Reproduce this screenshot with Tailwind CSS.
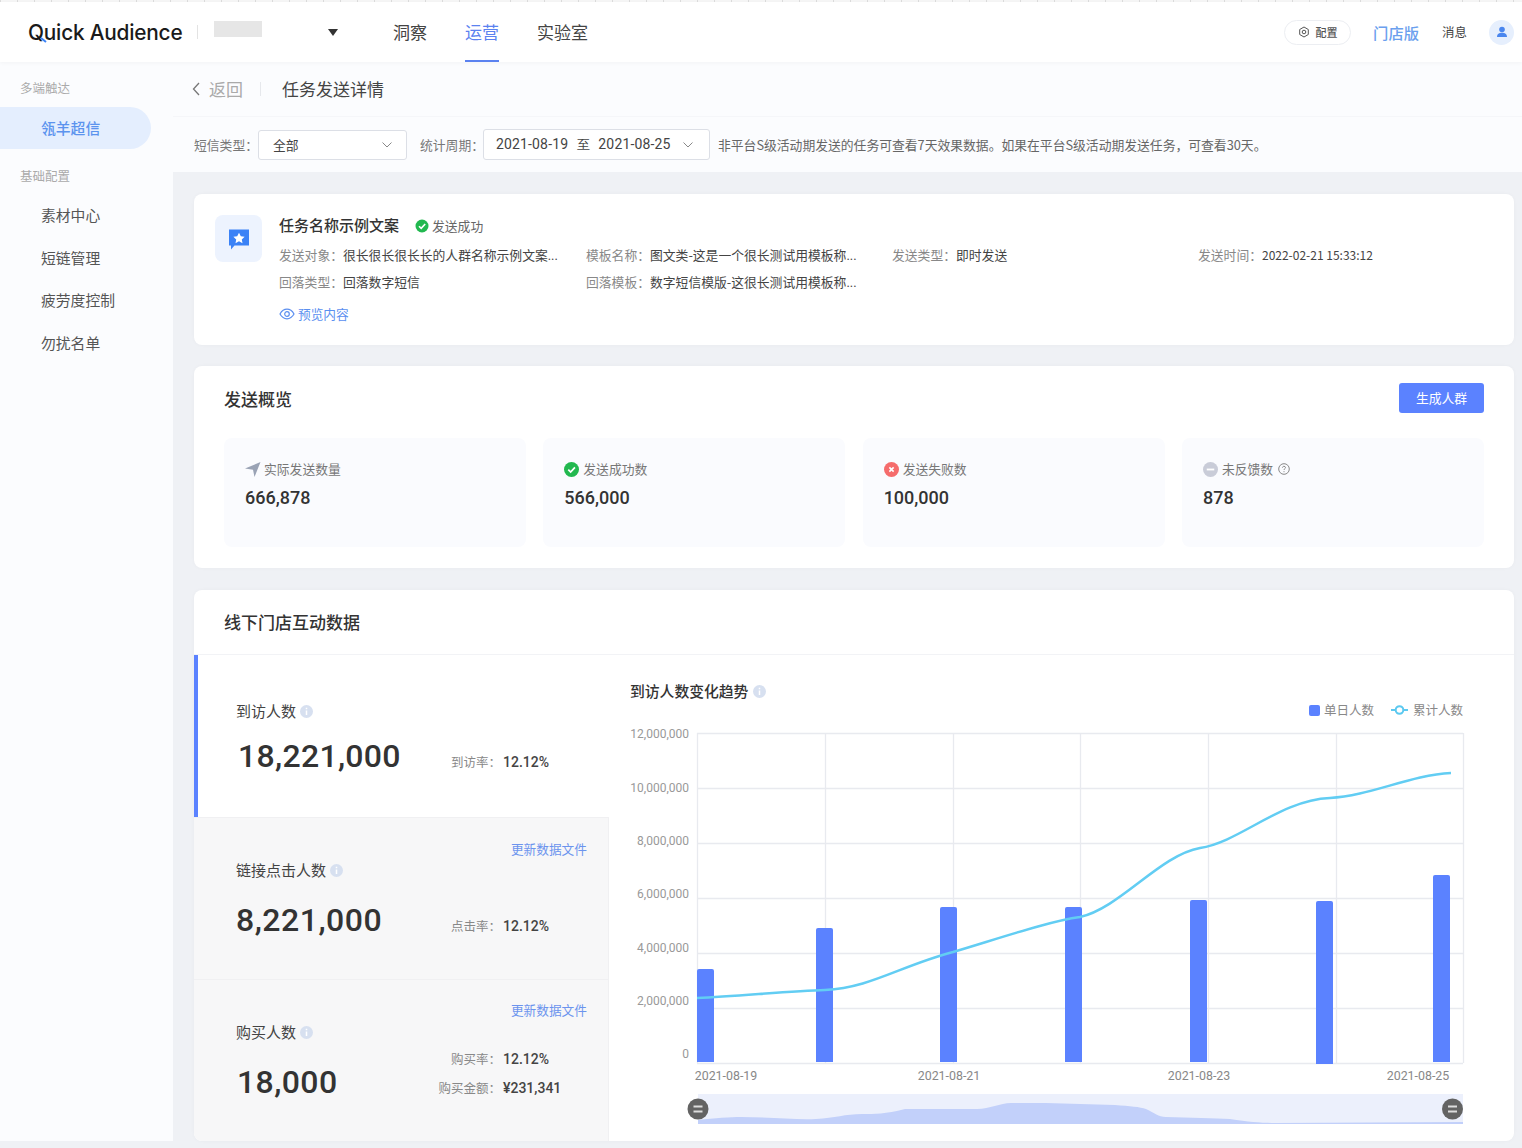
<!DOCTYPE html>
<html lang="zh">
<head>
<meta charset="UTF-8">
<title>任务发送详情</title>
<script src="https://cdn.jsdelivr.net/npm/@tailwindcss/browser@4"></script>
</head>
<body class="bg-[#eff1f5] text-[#333] font-['Noto_Sans_CJK_SC','Noto_Sans',sans-serif] w-[1522px] h-[1148px] overflow-hidden">

<!-- 顶栏 -->
<div class="h-[2px] bg-[repeating-linear-gradient(90deg,#dcdcdc_0_1px,#f6f6f6_1px_17px)]"></div>
<header class="h-[60px] bg-white flex items-center pl-[28px] pr-[8px] shadow-[0_1px_4px_rgba(0,0,0,0.04)] relative z-10">
  <div class="relative mt-[2px] w-[155px] text-[20.8px] leading-none font-medium tracking-[-0.2px] whitespace-nowrap text-[#1a1a1a] font-['Inter',sans-serif]">Quick Audience
    <svg class="absolute left-[12px] top-[14px]" width="7" height="6" viewBox="0 0 7 6"><path d="M1 1L6 5" stroke="#3b82f6" stroke-width="2"/></svg>
  </div>
  <div class="w-px h-[14px] bg-[#e3e3e3] ml-[14px]"></div>
  <div class="w-[48px] h-[16px] bg-[#e6e6e6] ml-[16px] -mt-[6px]"></div>
  <svg class="ml-[66px]" width="10" height="7" viewBox="0 0 10 7"><path d="M0 0h10L5 7z" fill="#333"/></svg>
  <nav class="flex ml-[55px] gap-[38px] text-[17px] h-full">
    <a class="flex items-center text-[#444]">洞察</a>
    <a class="flex items-center text-[#5b82f0] border-b-2 border-[#5b82f0] pt-[2px]">运营</a>
    <a class="flex items-center text-[#444]">实验室</a>
  </nav>
  <div class="ml-auto flex items-center">
    <div class="flex items-center h-[25px] w-[67px] rounded-full border border-[#eceef2] justify-center gap-[6px] text-[11px] text-[#555] font-medium">
      <svg width="12" height="12" viewBox="0 0 12 12" fill="none" stroke="#555"><path d="M6 1l4.300 2.500v5L6 11 1.700 8.500v-5z"/><circle cx="6" cy="6" r="1.800"/></svg>配置
    </div>
    <span class="ml-[22px] text-[15.3px] text-[#6aa0ee] font-medium">门店版</span>
    <span class="ml-[23px] text-[12.5px] text-[#444]">消息</span>
    <div class="ml-[22px] w-[25px] h-[25px] rounded-full bg-[#e6effd] flex items-center justify-center">
      <svg width="12" height="12" viewBox="0 0 12 12" fill="#4a86ee"><circle cx="6" cy="3.500" r="2.800"/><path d="M1 11c0-3 2.200-4.300 5-4.300s5 1.300 5 4.300z"/></svg>
    </div>
  </div>
</header>

<div class="flex h-[1079px]">
  <!-- 侧栏 -->
  <aside class="w-[173px] shrink-0 bg-[#fbfcfe] pr-[22px] text-[14.8px] text-[#555]">
    <div class="pl-[20px] pt-[17px] h-[45px] text-[12.5px] text-[#aaa] leading-[17px]">多端触达</div>
    <div class="h-[42px] rounded-r-full bg-[#e4eefe] text-[#5b93ee] font-medium flex items-center pl-[41px]">瓴羊超信</div>
    <div class="pl-[20px] pt-[18px] h-[45px] text-[12.5px] text-[#aaa] leading-[17px]">基础配置</div>
    <div class="pl-[41px] h-[42.500px] flex items-center">素材中心</div>
    <div class="pl-[41px] h-[42.500px] flex items-center">短链管理</div>
    <div class="pl-[41px] h-[42.500px] flex items-center">疲劳度控制</div>
    <div class="pl-[41px] h-[42.500px] flex items-center">勿扰名单</div>
  </aside>

  <main class="flex-1 min-w-0">
    <!-- 标题 -->
    <div class="h-[55px] bg-[#fbfcfe] border-b border-[#f5f6f9] flex items-center pl-[19px]">
      <svg width="8" height="14" viewBox="0 0 8 14" fill="none" stroke="#777" stroke-width="1.300"><path d="M7 1L1.500 7 7 13"/></svg>
      <span class="ml-[9px] text-[17px] text-[#aaa]">返回</span>
      <div class="w-px h-[14px] bg-[#e6e8ec] ml-[17px]"></div>
      <span class="ml-[21px] text-[17px] text-[#444]">任务发送详情</span>
    </div>
    <!-- 筛选 -->
    <div class="h-[55px] bg-[#fbfcfe] flex items-center pl-[21px] text-[12.8px] text-[#777]">
      <span class="w-[64px] whitespace-nowrap">短信类型：</span>
      <div class="w-[149px] h-[30px] bg-white border border-[#dcdfe6] rounded-[3px] flex items-center justify-between pl-[14px] pr-[14px] text-[#444]">
        全部
        <svg width="10" height="6" viewBox="0 0 10 6" fill="none" stroke="#888"><path d="M.5.500L5 5 9.500.5"/></svg>
      </div>
      <span class="ml-[13px] w-[63px] whitespace-nowrap">统计周期：</span>
      <div class="w-[227px] h-[31px] bg-white border border-[#dcdfe6] rounded-[3px] flex items-center pl-[12px] text-[#444] text-[14px] tracking-[0.15px] font-['Roboto',sans-serif]">
        <span>2021-08-19</span><span class="ml-[9px] text-[12.8px]">至</span><span class="ml-[8px]">2021-08-25</span>
        <svg class="ml-[12px]" width="10" height="6" viewBox="0 0 10 6" fill="none" stroke="#888"><path d="M.5.500L5 5 9.500.5"/></svg>
      </div>
      <span class="ml-[8px] text-[#666] whitespace-nowrap">非平台S级活动期发送的任务可查看7天效果数据。如果在平台S级活动期发送任务，可查看30天。</span>
    </div>

    <div class="pl-[21px] pr-[8px] pt-[22px]">
      <!-- 任务信息 -->
      <section class="h-[151px] bg-white rounded-lg flex pl-[21px] pt-[21px] shadow-[0_0_4px_rgba(0,0,0,0.03)]">
        <div class="w-[47px] h-[47px] bg-[#edf3fe] rounded-lg flex items-center justify-center shrink-0">
          <svg width="24" height="24" viewBox="0 0 24 24"><path d="M2 2.500h20v16H7.500L4 22.500v-4H2z" fill="#3b82f6"/><path d="M12 5.800l1.800 3.500 3.800.5-2.800 2.600.7 3.800-3.500-1.900-3.500 1.900.7-3.800-2.800-2.600 3.800-.5z" fill="#fff"/></svg>
        </div>
        <div class="ml-[17px] flex-1">
          <div class="flex items-center h-[21px]">
            <span class="text-[15px] font-medium text-[#333]">任务名称示例文案</span>
            <svg class="ml-[16px]" width="14" height="14" viewBox="0 0 14 14"><circle cx="7" cy="7" r="6.500" fill="#22b84f"/><path d="M4 7.200l2.200 2.200L10.200 5" fill="none" stroke="#fff" stroke-width="1.600"/></svg>
            <span class="ml-[3px] text-[12.8px] text-[#666]">发送成功</span>
          </div>
          <div class="grid grid-cols-[307px_306px_306px_1fr] mt-[10px] text-[12.8px] leading-[18px] text-[#444] whitespace-nowrap">
            <div><span class="text-[#888]">发送对象：</span>很长很长很长长的人群名称示例文案<span class="font-['Roboto',sans-serif]">...</span></div>
            <div><span class="text-[#888]">模板名称：</span>图文类-这是一个很长测试用模板称<span class="font-['Roboto',sans-serif]">...</span></div>
            <div><span class="text-[#888]">发送类型：</span>即时发送</div>
            <div><span class="text-[#888]">发送时间：</span><span class="text-[12px]">2022-02-21 15:33:12</span></div>
            <div class="mt-[8px]"><span class="text-[#888]">回落类型：</span>回落数字短信</div>
            <div class="mt-[8px]"><span class="text-[#888]">回落模板：</span>数字短信模版-这很长测试用模板称<span class="font-['Roboto',sans-serif]">...</span></div>
          </div>
          <div class="flex items-center mt-[13px] text-[12.7px] leading-[18px] text-[#5b8ff0]">
            <svg width="16" height="12" viewBox="0 0 16 12" fill="none" stroke="#5b8ff0" stroke-width="1.200"><path d="M1 6c1.800-3.200 4.200-4.800 7-4.800S13.200 2.800 15 6c-1.800 3.200-4.200 4.800-7 4.800S2.800 9.200 1 6z"/><circle cx="8" cy="6" r="2.300"/></svg>
            <span class="ml-[3px]">预览内容</span>
          </div>
        </div>
      </section>

      <!-- 发送概览 -->
      <section class="mt-[21px] h-[202px] bg-white rounded-lg px-[30px] shadow-[0_0_4px_rgba(0,0,0,0.03)]">
        <div class="h-[72px] flex items-start justify-between pt-[17px]">
          <h2 class="text-[17px] leading-[31px] font-medium text-[#333]">发送概览</h2>
          <button class="w-[85px] h-[30px] bg-[#5b82ff] rounded-[3px] text-[12.8px] text-white">生成人群</button>
        </div>
        <div class="grid grid-cols-4 gap-[17.300px]">
          <div class="h-[109px] bg-[#fafbfe] rounded-lg pl-[21px] pt-[22px]">
            <div class="flex items-center h-[18px] text-[12.8px] text-[#777]">
              <svg width="16" height="15" viewBox="0 0 16 15"><path d="M15.500 0L0 6.500l8 1.200L9.500 15z" fill="#9aa3b5"/></svg>
              <span class="ml-[3px]">实际发送数量</span>
            </div>
            <div class="mt-[6px] text-[18px] leading-[28px] font-medium font-['Roboto',sans-serif] text-[#333]">666,878</div>
          </div>
          <div class="h-[109px] bg-[#fafbfe] rounded-lg pl-[21px] pt-[22px]">
            <div class="flex items-center h-[18px] text-[12.8px] text-[#777]">
              <svg width="15" height="15" viewBox="0 0 14 14"><circle cx="7" cy="7" r="7" fill="#22b84f"/><path d="M4 7.200l2.200 2.200L10.200 5" fill="none" stroke="#fff" stroke-width="1.600"/></svg>
              <span class="ml-[4px]">发送成功数</span>
            </div>
            <div class="mt-[6px] text-[18px] leading-[28px] font-medium font-['Roboto',sans-serif] text-[#333]">566,000</div>
          </div>
          <div class="h-[109px] bg-[#fafbfe] rounded-lg pl-[21px] pt-[22px]">
            <div class="flex items-center h-[18px] text-[12.8px] text-[#777]">
              <svg width="15" height="15" viewBox="0 0 14 14"><circle cx="7" cy="7" r="7" fill="#f56c6c"/><path d="M5 5l4 4M9 5L5 9" fill="none" stroke="#fff" stroke-width="1.500"/></svg>
              <span class="ml-[4px]">发送失败数</span>
            </div>
            <div class="mt-[6px] text-[18px] leading-[28px] font-medium font-['Roboto',sans-serif] text-[#333]">100,000</div>
          </div>
          <div class="h-[109px] bg-[#fafbfe] rounded-lg pl-[21px] pt-[22px]">
            <div class="flex items-center h-[18px] text-[12.8px] text-[#777]">
              <svg width="15" height="15" viewBox="0 0 14 14"><circle cx="7" cy="7" r="7" fill="#c9ccd8"/><path d="M3.500 7h7" fill="none" stroke="#fff" stroke-width="1.700"/></svg>
              <span class="ml-[4px]">未反馈数</span>
              <svg class="ml-[5px]" width="12" height="12" viewBox="0 0 12 12" fill="none" stroke="#888"><circle cx="6" cy="6" r="5.300"/><path d="M4.500 4.700C4.500 3.800 5.200 3.300 6 3.300s1.500.5 1.500 1.300C7.500 5.700 6 5.700 6 7"/><path d="M6 8.200v1"/></svg>
            </div>
            <div class="mt-[6px] text-[18px] leading-[28px] font-medium font-['Roboto',sans-serif] text-[#333]">878</div>
          </div>
        </div>
      </section>

      <!-- 互动数据 -->
      <section class="mt-[22px] h-[551px] bg-white rounded-lg overflow-hidden shadow-[0_0_4px_rgba(0,0,0,0.03)]">
        <div class="h-[65px] border-b border-[#f2f3f6] pl-[30px] flex items-center">
          <h2 class="text-[17px] font-medium text-[#333]">线下门店互动数据</h2>
        </div>
        <div class="flex h-[486px]">
          <div class="w-[415px] shrink-0 flex flex-col">
            <div class="h-[162px] border-l-4 border-[#5b82ff] pl-[38px] pt-[46px]">
              <div class="flex items-center h-[20px] text-[15px] text-[#444]">到访人数
                <svg class="ml-[4px]" width="13" height="13" viewBox="0 0 13 13"><circle cx="6.500" cy="6.500" r="6.500" fill="#d7e0f0"/><path d="M6.500 5.500v4.500M6.500 2.800v1.400" stroke="#fff" stroke-width="1.500"/></svg>
              </div>
              <div class="flex items-end mt-[13px]">
                <div class="w-[197px] pl-[2px] text-[32px] leading-[44px] font-medium font-['Roboto',sans-serif] tracking-[0.3px] text-[#333]">18,221,000</div>
                <div class="flex items-center h-[20px] mb-[6px]"><span class="w-[68px] text-right text-[12.5px] text-[#888]">到访率：</span><span class="ml-[2px] text-[14px] font-medium font-['Roboto',sans-serif] text-[#444]">12.12%</span></div>
              </div>
            </div>
            <div class="h-[163px] bg-[#f7f7f8] border-y border-[#f0f0f2] border-r pl-[42px] pr-[21px] pt-[22px]">
              <div class="text-right text-[12.7px] leading-[18px] text-[#6c94ee]">更新数据文件</div>
              <div class="flex items-center h-[20px] mt-[2px] text-[15px] text-[#444]">链接点击人数
                <svg class="ml-[4px]" width="13" height="13" viewBox="0 0 13 13"><circle cx="6.500" cy="6.500" r="6.500" fill="#d7e0f0"/><path d="M6.500 5.500v4.500M6.500 2.800v1.400" stroke="#fff" stroke-width="1.500"/></svg>
              </div>
              <div class="flex items-end mt-[18px]">
                <div class="w-[197px] text-[32px] leading-[44px] font-medium font-['Roboto',sans-serif] tracking-[0.5px] text-[#333]">8,221,000</div>
                <div class="flex items-center h-[20px] mb-[6px]"><span class="w-[68px] text-right text-[12.5px] text-[#888]">点击率：</span><span class="ml-[2px] text-[14px] font-medium font-['Roboto',sans-serif] text-[#444]">12.12%</span></div>
              </div>
            </div>
            <div class="flex-1 bg-[#f7f7f8] border-r border-[#f0f0f2] pl-[42px] pr-[21px] pt-[21px]">
              <div class="text-right text-[12.7px] leading-[18px] text-[#6c94ee]">更新数据文件</div>
              <div class="flex items-center h-[20px] mt-[3px] text-[15px] text-[#444]">购买人数
                <svg class="ml-[4px]" width="13" height="13" viewBox="0 0 13 13"><circle cx="6.500" cy="6.500" r="6.500" fill="#d7e0f0"/><path d="M6.500 5.500v4.500M6.500 2.800v1.400" stroke="#fff" stroke-width="1.500"/></svg>
              </div>
              <div class="flex items-start mt-[5px]">
                <div class="w-[197px] pl-[1px] pt-[13px] text-[32px] leading-[44px] font-medium font-['Roboto',sans-serif] tracking-[0.4px] text-[#333]">18,000</div>
                <div class="flex flex-col gap-[9px] mt-[2px]">
                  <div class="flex items-center h-[20px]"><span class="w-[68px] text-right text-[12.5px] text-[#888]">购买率：</span><span class="ml-[2px] text-[14px] font-medium font-['Roboto',sans-serif] text-[#444]">12.12%</span></div>
                  <div class="flex items-center h-[20px]"><span class="w-[68px] text-right text-[12.5px] text-[#888]">购买金额：</span><span class="ml-[2px] text-[14px] font-medium font-['Roboto',sans-serif] text-[#444]">¥231,341</span></div>
                </div>
              </div>
            </div>
          </div>

          <!-- 趋势图 -->
          <div class="flex-1 min-w-0 pl-[21px] pt-[26px]">
            <div class="flex items-center h-[20px] text-[14.8px] font-medium text-[#333]">到访人数变化趋势
              <svg class="ml-[5px]" width="13" height="13" viewBox="0 0 13 13"><circle cx="6.500" cy="6.500" r="6.500" fill="#d7e0f0"/><path d="M6.500 5.500v4.500M6.500 2.800v1.400" stroke="#fff" stroke-width="1.500"/></svg>
            </div>
            <div class="flex justify-end items-center h-[18px] pr-[51px] text-[12.5px] text-[#888]">
              <span class="w-[11px] h-[11px] rounded-[2px] bg-[#5b82ff]"></span><span class="ml-[4px]">单日人数</span>
              <svg class="ml-[17px]" width="17" height="10" viewBox="0 0 17 10" fill="none" stroke="#5cc9f0" stroke-width="2"><path d="M0 5h17"/><circle cx="8.500" cy="5" r="3.800" fill="#fff"/></svg>
              <span class="ml-[5px]">累计人数</span>
            </div>
            <svg class="-ml-[10px] mt-[3px]" width="860" height="410" viewBox="620 722 860 410">
              <g fill="none" stroke="#e8eaef" stroke-width="1.300">
                <path d="M697 733.500H1463M697 788.500H1463M697 843.500H1463M697 898.500H1463M697 953.500H1463M697 1008.500H1463M697 1063.500H1463"/>
                <path d="M697.500 733V1063M825.500 733V1063M953.500 733V1063M1080.500 733V1063M1208.500 733V1063M1336.500 733V1063M1463.500 733V1063"/>
              </g>
              <g fill="#5b82ff">
                <path d="M697 971a2 2 0 0 1 2-2h13a2 2 0 0 1 2 2v91h-17z"/>
                <path d="M816 930a2 2 0 0 1 2-2h13a2 2 0 0 1 2 2v132h-17z"/>
                <path d="M940 909a2 2 0 0 1 2-2h13a2 2 0 0 1 2 2v153h-17z"/>
                <path d="M1065 909a2 2 0 0 1 2-2h13a2 2 0 0 1 2 2v153h-17z"/>
                <path d="M1190 902a2 2 0 0 1 2-2h13a2 2 0 0 1 2 2v160h-17z"/>
                <path d="M1316 903a2 2 0 0 1 2-2h13a2 2 0 0 1 2 2v161h-17z"/>
                <path d="M1433 877a2 2 0 0 1 2-2h13a2 2 0 0 1 2 2v185h-17z"/>
              </g>
              <path d="M697 998C740 996 790 991 825 990C870 988 900 966 953 952C1000 938 1050 921 1080 917C1120 908 1160 855 1200 848C1240 842 1280 800 1330 798C1370 796 1410 775 1451 773" fill="none" stroke="#62cdf3" stroke-width="2.500"/>
              <g class="text-[12px]" fill="#999" text-anchor="end" font-family="Roboto, sans-serif">
                <text x="689" y="738">12,000,000</text>
                <text x="689" y="792">10,000,000</text>
                <text x="689" y="845">8,000,000</text>
                <text x="689" y="898">6,000,000</text>
                <text x="689" y="952">4,000,000</text>
                <text x="689" y="1005">2,000,000</text>
                <text x="689" y="1058">0</text>
              </g>
              <g class="text-[12.4px]" fill="#888" text-anchor="middle" font-family="Roboto, sans-serif">
                <text x="726" y="1080">2021-08-19</text>
                <text x="949" y="1080">2021-08-21</text>
                <text x="1199" y="1080">2021-08-23</text>
                <text x="1418" y="1080">2021-08-25</text>
              </g>
              <rect x="698" y="1094" width="765" height="30" fill="#ecf0fc"/>
              <path d="M698 1120C715 1118 730 1117 741 1117C770 1117 795 1120 816 1119C835 1118 845 1114 862 1114C875 1114 885 1114 905 1109L977 1109C990 1109 1000 1103 1011 1103C1020 1103 1035 1103 1046 1103L1115 1105C1130 1106 1140 1107 1146 1109C1155 1113 1158 1117 1166 1117C1190 1118 1215 1118 1230 1119C1250 1122 1262 1123 1276 1123L1463 1122V1124H698z" fill="#c2d0fa"/>
              <g>
                <circle cx="698" cy="1109" r="10.500" fill="#636363"/>
                <path d="M693.500 1106.500h9M693.500 1111.500h9" stroke="#ddd" stroke-width="2"/>
                <circle cx="1452.500" cy="1109" r="10.500" fill="#636363"/>
                <path d="M1448 1106.500h9M1448 1111.500h9" stroke="#ddd" stroke-width="2"/>
              </g>
            </svg>
          </div>
        </div>
      </section>
    </div>
  </main>
</div>
</body>
</html>
